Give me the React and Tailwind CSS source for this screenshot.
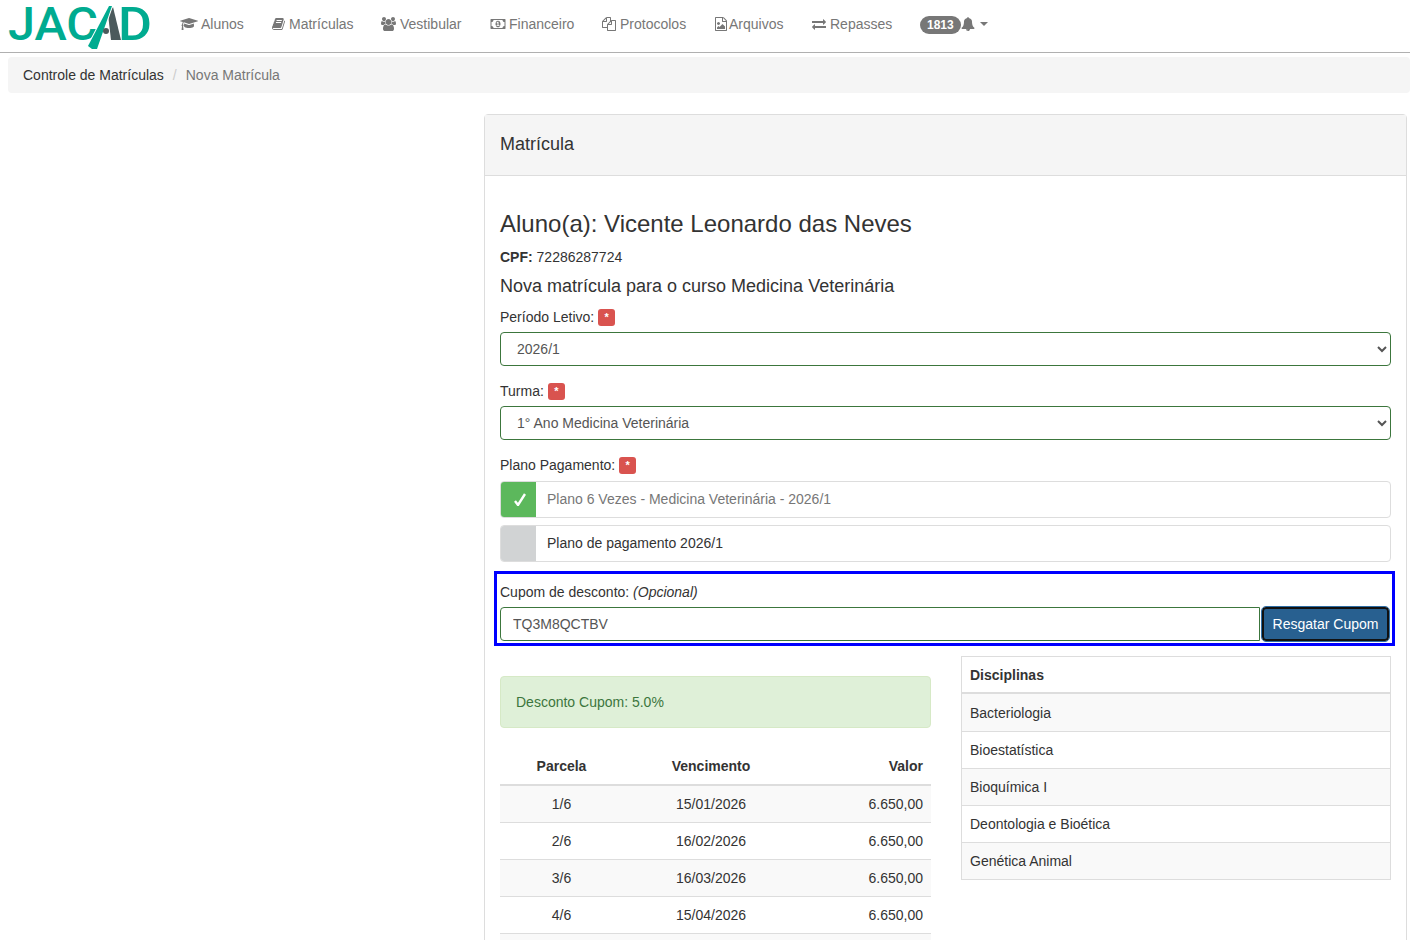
import React from "react";

// Font Awesome 4 glyphs, the package only ships the 5.x drawings
const glyphs = {
  cap: [2304, "M1774 836l18 316q4 69-82 128t-235 93.5-323 34.5-323-34.5-235-93.5-82-128l18-316 574 181q22 7 48 7t48-7zm530-324q0 17-17 23l-1120 352q-4 1-9 1t-9-1l-652-206q-43 34-71 111.5t-34 178.5q63 36 63 109 0 69-58 107l58 433q2 14-8 25-9 11-24 11h-192q-15 0-24-11-10-11-8-25l58-433q-58-38-58-107 0-73 65-111 11-207 98-330l-333-104q-17-6-17-23t17-23l1120-352q4-1 9-1t9 1l1120 352q17 6 17 23z"],
  book: [1792, "M1639 478q40 57 18 129l-275 906q-19 64-76.5 107.5t-122.5 43.5h-923q-77 0-148.5-53.5t-99.5-131.5q-24-67-2-127 0-4 3-27t4-37q1-8-3-21.5t-3-19.5q2-11 8-21t16.5-23.5 16.5-23.5q23-38 45-91.5t30-91.5q3-10 .5-30t-.5-28q3-11 17-28t17-23q21-36 42-92t25-90q1-9-2.5-32t.5-28q4-13 22-30.5t22-22.5q19-26 42.5-84.5t27.5-96.5q1-8-3-25.5t-2-26.5q2-8 9-18t18-23 17-21q8-12 16.5-30.5t15-35 16-36 19.5-32 26.5-23.5 36-11.5 47.5 5.5l-1 3q38-9 51-9h761q74 0 114 56t18 130l-274 906q-36 119-71.5 153.5t-128.5 34.5h-869q-27 0-38 15-11 16-1 43 24 70 144 70h923q29 0 56-15.5t35-41.5l300-987q7-22 5-57 38 15 59 43zm-1064 2q-4 13 2 22.5t20 9.5h608q13 0 25.5-9.5t16.5-22.5l21-64q4-13-2-22.5t-20-9.5h-608q-13 0-25.5 9.5t-16.5 22.5zm-83 256q-4 13 2 22.5t20 9.5h608q13 0 25.5-9.5t16.5-22.5l21-64q4-13-2-22.5t-20-9.5h-608q-13 0-25.5 9.5t-16.5 22.5z"],
  users: [2048, "M593 896q-162 5-265 128h-134q-82 0-138-40.5t-56-118.5q0-353 124-353 6 0 43.5 21t97.5 42.5 119 21.5q67 0 133-23-5 37-5 66 0 139 81 256zm1071 637q0 120-73 189.5t-194 69.5h-874q-121 0-194-69.5t-73-189.5q0-53 3.5-103.5t14-109 26.5-108.5 43-97.5 62-81 85.5-53.5 111.5-20q10 0 43 21.5t73 48 107 48 135 21.5 135-21.5 107-48 73-48 43-21.5q61 0 111.5 20t85.5 53.5 62 81 43 97.5 26.5 108.5 14 109 3.5 103.5zm-1024-1277q0 106-75 181t-181 75-181-75-75-181 75-181 181-75 181 75 75 181zm704 384q0 159-112.5 271.5t-271.5 112.5-271.5-112.5-112.5-271.5 112.5-271.5 271.5-112.5 271.5 112.5 112.5 271.5zm576 225q0 78-56 118.5t-138 40.5h-134q-103-123-265-128 81-117 81-256 0-29-5-66 66 23 133 23 59 0 119-21.5t97.5-42.5 43.5-21q124 0 124 353zm-128-609q0 106-75 181t-181 75-181-75-75-181 75-181 181-75 181 75 75 181z"],
  money: [2048, "M832 1152h384v-96h-128v-448h-114l-148 137 77 80q42-37 55-57h2v288h-128v96zm512-256q0 70-21 142t-59.5 134-101.5 101-138 39-138-39-101.5-101-59.5-134-21-142 21-142 59.5-134 101.5-101 138-39 138 39 101.5 101 59.5 134 21 142zm512 256v-512q-106 0-181-75t-75-181h-1152q0 106-75 181t-181 75v512q106 0 181 75t75 181h1152q0-106 75-181t181-75zm128-832v1152q0 26-19 45t-45 19h-1792q-26 0-45-19t-19-45v-1152q0-26 19-45t45-19h1792q26 0 45 19t19 45z"],
  files: [1792, "M1696 384q40 0 68 28t28 68v1216q0 40-28 68t-68 28h-960q-40 0-68-28t-28-68v-288h-544q-40 0-68-28t-28-68v-672q0-40 20-88t48-76l408-408q28-28 76-48t88-20h416q40 0 68 28t28 68v328q68-40 128-40h416zm-544 213l-299 299h299v-299zm-640-384l-299 299h299v-299zm196 647l316-316v-416h-384v416q0 40-28 68t-68 28h-416v640h512v-256q0-40 20-88t48-76zm956 804v-1152h-384v416q0 40-28 68t-68 28h-416v640h896z"],
  image: [1792, "M1596 380q28 28 48 76t20 88v1152q0 40-28 68t-68 28h-1344q-40 0-68-28t-28-68v-1600q0-40 28-68t68-28h896q40 0 88 20t76 48zm-444-244v376h376q-10-29-22-41l-313-313q-12-12-41-22zm384 1528v-1024h-416q-40 0-68-28t-28-68v-416h-768v1536h1280zm-128-448v320h-1024v-192l192-192 128 128 384-384zm-832-192q-80 0-136-56t-56-136 56-136 136-56 136 56 56 136-56 136-136 56z"],
  exchange: [1792, "M1792 1184v192q0 13-9.5 22.5t-22.5 9.5h-1376v192q0 13-9.5 22.5t-22.5 9.5q-12 0-24-10l-319-320q-9-9-9-22 0-14 9-23l320-320q9-9 23-9 13 0 22.5 9.5t9.5 22.5v192h1376q13 0 22.5 9.5t9.5 22.5zm0-544q0 14-9 23l-320 320q-9 9-23 9-13 0-22.5-9.5t-9.5-22.5v-192h-1376q-13 0-22.5-9.5t-9.5-22.5v-192q0-13 9.5-22.5t22.5-9.5h1376v-192q0-14 9-23t23-9q12 0 24 10l319 319q9 9 9 23z"],
  bell: [1792, "M912 1696q0-16-16-16-59 0-101.5-42.5t-42.5-101.5q0-16-16-16t-16 16q0 73 51.5 124.5t124.5 51.5q16 0 16-16zm816-288q0 52-38 90t-90 38h-448q0 106-75 181t-181 75-181-75-75-181h-448q-52 0-90-38t-38-90q50-42 91-88t85-119.5 74.5-158.5 50-206 19.5-260q0-152 117-282.5t307-158.5q-8-19-8-39 0-40 28-68t68-28 68 28 28 68q0 20-8 39 190 28 307 158.5t117 282.5q0 139 19.5 260t50 206 74.5 158.5 85 119.5 91 88z"],
};

function Glyph({ name }) {
  const [w, d] = glyphs[name];
  return (
    <svg width={(w / 1792) * 14} height="14" viewBox={`0 0 ${w} 1792`} fill="currentColor" className="shrink-0">
      <path d={d} />
    </svg>
  );
}

const menu = [
  { label: "Alunos", icon: "cap", width: "w-[92px]", gap: "gap-[3px]" },
  { label: "Matrículas", icon: "book", width: "w-[109px]", gap: "gap-[3px]" },
  { label: "Vestibular", icon: "users", width: "w-[109px]", gap: "gap-[3px]" },
  { label: "Financeiro", icon: "money", width: "w-[112px]", gap: "gap-[3px]" },
  { label: "Protocolos", icon: "files", width: "w-[112px]", gap: "gap-[4px]" },
  { label: "Arquivos", icon: "image", width: "w-[98px]", gap: "gap-[1px]" },
  { label: "Repasses", icon: "exchange", width: "w-[108px]", gap: "gap-[4px]" },
];

// the fifth row is past the bottom of the picture, only its stripe shows
const parcelas = [
  ["1/6", "15/01/2026", "6.650,00"],
  ["2/6", "16/02/2026", "6.650,00"],
  ["3/6", "16/03/2026", "6.650,00"],
  ["4/6", "15/04/2026", "6.650,00"],
  ["", "", ""],
];

const disciplinas = [
  "Bacteriologia",
  "Bioestatística",
  "Bioquímica I",
  "Deontologia e Bioética",
  "Genética Animal",
];

function Logo() {
  return (
    <svg width="146" height="50" viewBox="0 0 146 50" className="shrink-0">
      <text x="0" y="39" fontFamily="Roboto, sans-serif" fontSize="46" fontWeight="500" fill="#00ab90" textLength="90" lengthAdjust="spacingAndGlyphs">
        JAC
      </text>
      <polygon points="100,13 105,6 113,39 103,39" fill="#4c5a5c" />
      <polygon points="101,5 104,5 89,48 84,48 80,45" fill="#00ab90" stroke="#fff" strokeWidth="2" paintOrder="stroke" />
      <circle cx="98" cy="30" r="3" fill="#4c5a5c" />
      <text x="110" y="39" fontFamily="Roboto, sans-serif" fontSize="46" fontWeight="500" fill="#00ab90" textLength="34" lengthAdjust="spacingAndGlyphs">
        D
      </text>
    </svg>
  );
}

function Required() {
  return (
    <span className="ml-[4px] inline-flex h-[17px] w-[17px] items-start justify-center rounded-[3px] bg-[#d9534f] text-[11px] font-bold leading-[17px] text-white">
      *
    </span>
  );
}

function PlanOption({ checked, children }) {
  return (
    <div className="flex h-[37px] overflow-hidden rounded-[4px] border border-[#ddd]">
      <div className={`flex w-[35px] items-center justify-center ${checked ? "bg-[#5cb85c]" : "bg-[#d1d3d4]"}`}>
        {checked && (
          <svg width="12" height="13" viewBox="0 0 12 13" className="ml-[3px]">
            <path d="M1 8 L4 12 L11 1" fill="none" stroke="#fff" strokeWidth="2.4" />
          </svg>
        )}
      </div>
      <div className={`flex items-center pb-[1px] pl-[11px] ${checked ? "text-[#777]" : "text-[#333]"}`}>{children}</div>
    </div>
  );
}

export default function App() {
  return (
    <div className="h-[940px] overflow-hidden bg-white font-['Liberation_Sans',Arial,sans-serif] text-[14px] leading-[20px] text-[#333]">
      {/* navbar */}
      <nav className="flex h-[53px] items-center border-b border-[#b0b0b0] pl-[8px]">
        <Logo />
        <ul className="mb-[4px] ml-[26px] flex items-center text-[#777]">
          {menu.map((item) => (
            <li key={item.label} className={`flex items-center ${item.gap} ${item.width}`}>
              <Glyph name={item.icon} />
              <span>{item.label}</span>
            </li>
          ))}
          <li className="flex items-center">
            <span className="mt-[1px] rounded-[10px] bg-[#777] px-[7px] text-[12px] font-bold leading-[18px] text-white">1813</span>
            <Glyph name="bell" />
            <span className="ml-[5px] h-0 w-0 border-x-[4px] border-t-[4px] border-x-transparent border-t-[#777]" />
          </li>
        </ul>
      </nav>

      {/* breadcrumb */}
      <div className="ml-[8px] mt-[4px] flex h-[36px] items-center rounded-[4px] bg-[#f5f5f5] px-[15px]">
        <span>Controle de Matrículas</span>
        <span className="px-[9px] text-[#ccc]">/</span>
        <span className="text-[#777]">Nova Matrícula</span>
      </div>

      {/* panel */}
      <div className="ml-[484px] mr-[3px] mt-[21px] rounded-[4px] border border-[#ddd]">
        <div className="flex h-[61px] items-center border-b border-[#ddd] bg-[#f5f5f5] px-[15px] pb-[2px] text-[18px]">
          Matrícula
        </div>
        <div className="px-[15px] pt-[30px]">
          <h3 className="text-[24px] leading-[36px]">Aluno(a): Vicente Leonardo das Neves</h3>
          <p className="mt-[5px]">
            <b>CPF:</b> 72286287724
          </p>
          <h4 className="mt-[7px] text-[18px] leading-[24px]">Nova matrícula para o curso Medicina Veterinária</h4>

          <label className="mt-[7px] flex h-[24px] items-center">
            Período Letivo: <Required />
          </label>
          <select className="mt-[3px] block h-[34px] w-full rounded-[4px] border border-[#3c763d] bg-white px-[12px] text-[#555]">
            <option>2026/1</option>
          </select>

          <label className="mt-[13px] flex h-[24px] items-center">
            Turma: <Required />
          </label>
          <select className="mt-[3px] block h-[34px] w-full rounded-[4px] border border-[#3c763d] bg-white px-[12px] text-[#555]">
            <option>1° Ano Medicina Veterinária</option>
          </select>

          <label className="mt-[13px] flex h-[24px] items-center">
            Plano Pagamento: <Required />
          </label>
          <div className="mt-[4px] flex flex-col gap-[7px]">
            <PlanOption checked>Plano 6 Vezes - Medicina Veterinária - 2026/1</PlanOption>
            <PlanOption>Plano de pagamento 2026/1</PlanOption>
          </div>

          {/* cupom */}
          <div className="-ml-[6px] -mr-[4px] mt-[9px] h-[75px] border-[3px] border-[#0000ff] px-[3px] pt-[8px]">
            <label className="block">
              Cupom de desconto: <i>(Opcional)</i>
            </label>
            <div className="mt-[5px] flex h-[34px]">
              <input
                readOnly
                value="TQ3M8QCTBV"
                className="min-w-0 flex-1 rounded-l-[4px] border border-[#3c763d] bg-white px-[12px] text-[#555] outline-none"
              />
              <button className="ml-[2px] w-[127px] rounded-[4px] border-2 border-[#111] bg-[#286090] text-white outline outline-1 outline-[#2e6da4]">
                Resgatar Cupom
              </button>
            </div>
          </div>

          <div className="mt-[10px] grid grid-cols-[431px_430px] gap-x-[30px]">
            <div className="pt-[20px]">
              <div className="flex h-[52px] items-center rounded-[4px] border border-[#d6e9c6] bg-[#dff0d8] px-[15px] text-[#3c763d]">
                Desconto Cupom: 5.0%
              </div>
              <table className="mt-[19px] w-full border-collapse">
                <thead>
                  <tr className="h-[38px] border-b-2 border-[#ddd] font-bold">
                    <th className="w-[123px] text-center">Parcela</th>
                    <th className="w-[176px] text-center">Vencimento</th>
                    <th className="pr-[8px] text-right">Valor</th>
                  </tr>
                </thead>
                <tbody>
                  {parcelas.map((row, i) => (
                    <tr key={i} className={`h-[37px] border-b border-[#ddd] ${i % 2 === 0 ? "bg-[#f9f9f9]" : ""}`}>
                      <td className="text-center">{row[0]}</td>
                      <td className="text-center">{row[1]}</td>
                      <td className="pr-[8px] text-right">{row[2]}</td>
                    </tr>
                  ))}
                </tbody>
              </table>
            </div>

            <div className="self-start border border-[#ddd]">
              <div className="flex h-[37px] items-center border-b-2 border-[#ddd] px-[8px] font-bold">Disciplinas</div>
              {disciplinas.map((d, i) => (
                <div
                  key={d}
                  className={`flex h-[37px] items-center px-[8px] ${i > 0 ? "border-t border-[#ddd]" : ""} ${i % 2 === 0 ? "bg-[#f9f9f9]" : ""}`}
                >
                  {d}
                </div>
              ))}
            </div>
          </div>
        </div>
      </div>
    </div>
  );
}
